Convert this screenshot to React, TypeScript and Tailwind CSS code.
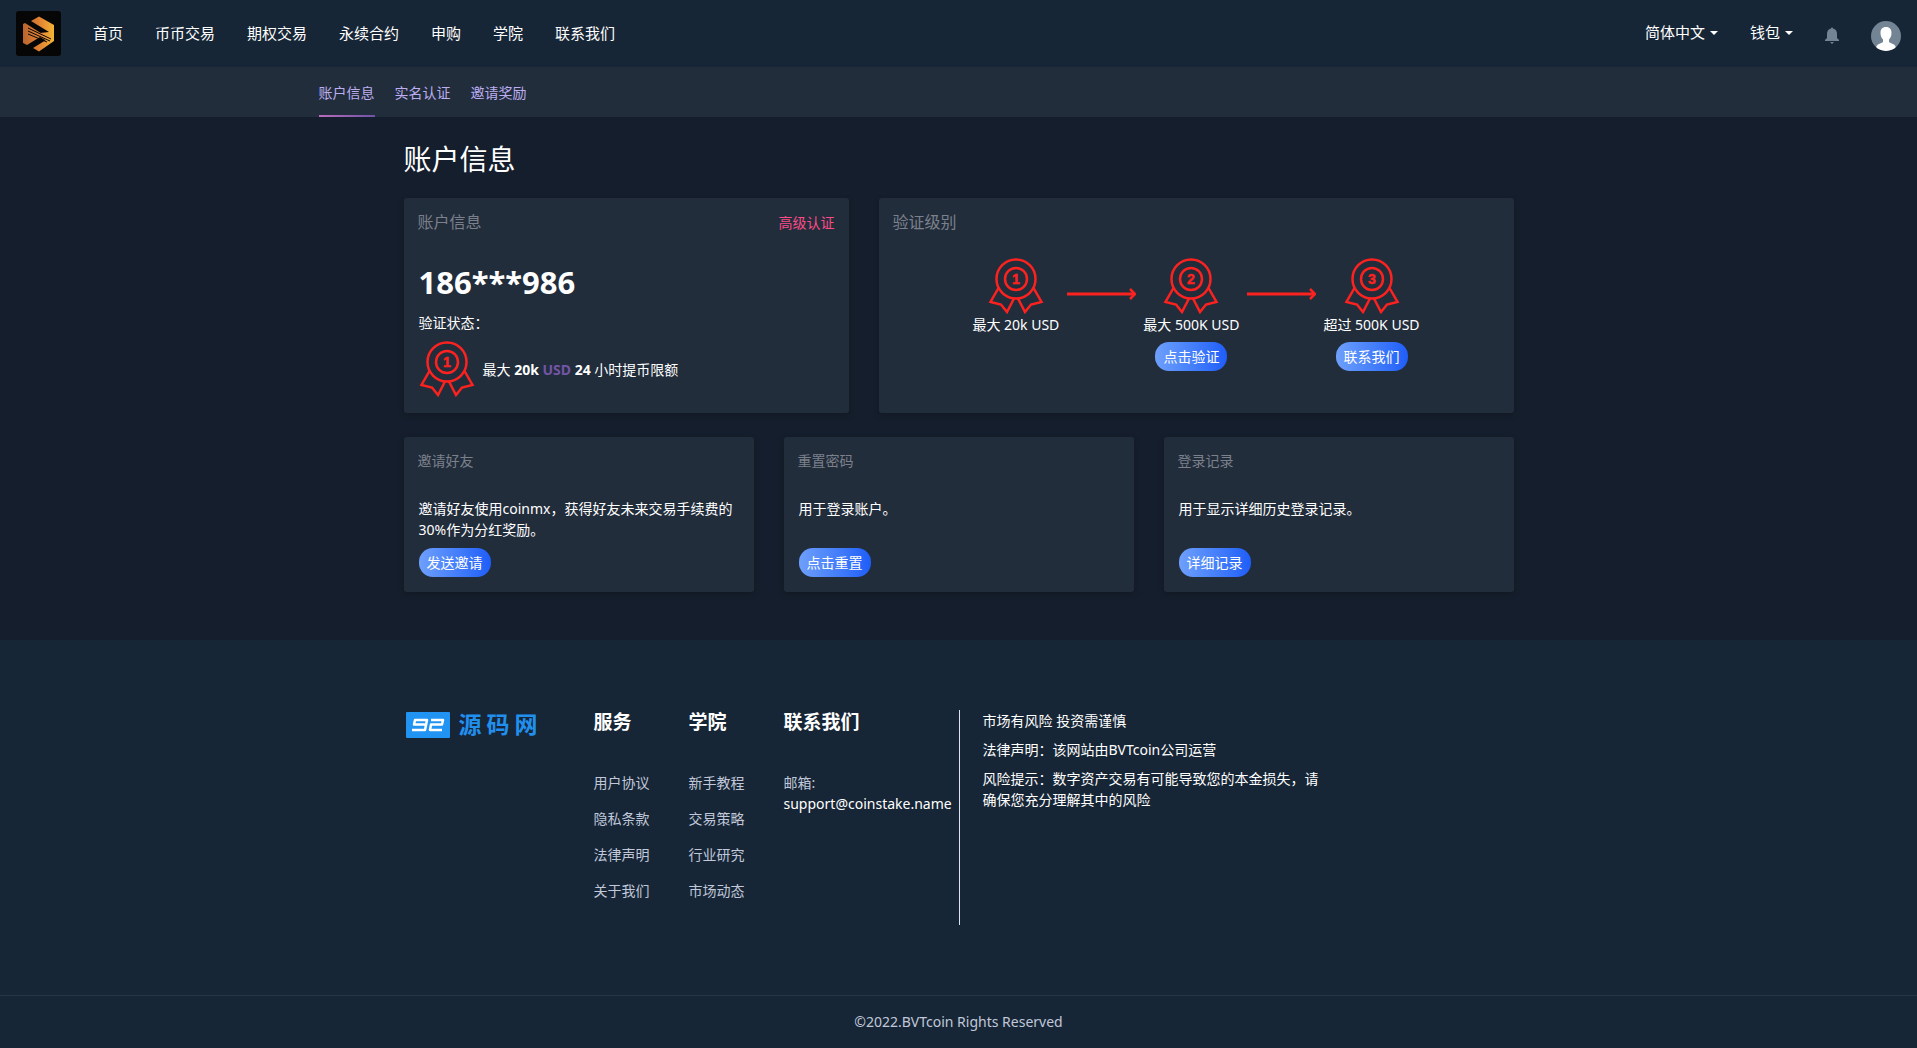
import React from 'react';
import { clsx } from 'clsx';

const navLinks = ['首页', '币币交易', '期权交易', '永续合约', '申购', '学院', '联系我们'];

const tabs = ['账户信息', '实名认证', '邀请奖励'];

const levels = [
  { level: 1, label: '最大 20k USD', action: null },
  { level: 2, label: '最大 500K USD', action: '点击验证' },
  { level: 3, label: '超过 500K USD', action: '联系我们' }
];

const actionCards = [
  {
    title: '邀请好友',
    text: '邀请好友使用coinmx，获得好友未来交易手续费的30%作为分红奖励。',
    action: '发送邀请'
  },
  { title: '重置密码', text: '用于登录账户。', action: '点击重置' },
  { title: '登录记录', text: '用于显示详细历史登录记录。', action: '详细记录' }
];

const footerColumns = [
  { title: '服务', links: ['用户协议', '隐私条款', '法律声明', '关于我们'] },
  { title: '学院', links: ['新手教程', '交易策略', '行业研究', '市场动态'] }
];

const BrandLogo: React.FC = () => (
  <svg viewBox="0 0 45 45" className="w-[45px] h-[45px] shrink-0" aria-hidden="true">
    <defs>
      <linearGradient id="brand" gradientUnits="userSpaceOnUse" x1="7" x2="38" y1="0" y2="0">
        <stop offset="0" stopColor="#b9652f" />
        <stop offset="0.5" stopColor="#e07f33" />
        <stop offset="1" stopColor="#f3b534" />
      </linearGradient>
    </defs>
    <rect width="45" height="45" rx="3" fill="#060606" />
    <g fill="url(#brand)">
      <path d="M15 10 L23 5.500 L38 14 V30 L23 40.500 L17 37 L30 29 L24 22 L33 21 Z" />
      <path d="M7 13 L9 12 L34 28 L31 30 L24 26 L11 34 L7 32 Z" />
    </g>
    <g stroke="#060606" strokeWidth="1">
      <path d="M12 17 L35 28" />
      <path d="M12 20 L34 30" />
      <path d="M12 23 L31 31" />
    </g>
  </svg>
);

const Medal: React.FC<{ level: number }> = ({ level }) => (
  <svg viewBox="0 0 56 56" className="size-14 shrink-0" fill="none" stroke="#fc221f" strokeWidth="2.5">
    <circle cx="28" cy="21" r="19.500" />
    <circle cx="28" cy="21" r="11" />
    <path d="M10.500 30 L2.500 44 L13 46.500 L19 54 L26 40.500" />
    <path d="M45.500 30 L53.500 44 L43 46.500 L37 54 L30 40.500" />
    <text
      x="28"
      y="26"
      textAnchor="middle"
      fill="#fc221f"
      strokeWidth="0.5"
      className="font-['Liberation_Sans',sans-serif] text-[14px] font-bold"
    >
      {level}
    </text>
  </svg>
);

const Arrow: React.FC = () => (
  <svg viewBox="0 0 70 12" className="w-[70px] h-3 mx-[7px] mt-[30px] shrink-0" fill="none" stroke="#fc221f">
    <path d="M1 6 H68" strokeWidth="3" />
    <path d="M64 1 L69 6 L64 11" strokeWidth="2.5" />
  </svg>
);

const Caret: React.FC = () => (
  <svg viewBox="0 0 8 4" className="w-2 h-1" aria-hidden="true">
    <path d="M0 0 H8 L4 4 Z" fill="#fff" />
  </svg>
);

const PillButton: React.FC<{ children: React.ReactNode }> = ({ children }) => (
  <button className="block h-[29px] px-2 rounded-[14px] bg-linear-to-r from-[#6e9ffb] to-[#1f5df8] text-sm text-white">
    {children}
  </button>
);

const Card: React.FC<{ className?: string; children: React.ReactNode }> = ({ className, children }) => (
  <section className={clsx('rounded-[3px] bg-[#222d3c] shadow-[0_2px_6px_rgba(0,0,0,0.2)]', className)}>
    {children}
  </section>
);

const App: React.FC = () => {
  return (
    <div className="min-h-screen flex flex-col bg-[#151e2c] text-sm leading-[21px] text-white font-['Noto_Sans','Noto_Sans_CJK_SC',sans-serif]">
      {/* Top bar */}
      <header className="h-[67px] px-4 flex items-center justify-between bg-[#172636]">
        <div className="flex items-center gap-8">
          <a href="#" aria-label="BVTcoin">
            <BrandLogo />
          </a>
          <nav className="flex items-center gap-8 text-[15px]">
            {navLinks.map((link) => (
              <a key={link} href="#">
                {link}
              </a>
            ))}
          </nav>
        </div>

        <div className="flex items-center">
          <button className="flex items-center gap-[5px] text-[15px] mr-8 pb-[2px]">
            简体中文
            <Caret />
          </button>
          <button className="flex items-center gap-[5px] text-[15px] mr-8 pb-[2px]">
            钱包
            <Caret />
          </button>
          <button aria-label="通知" className="mr-8 pt-1">
            <svg viewBox="0 0 14 17" className="w-[14px] h-[17px]" fill="#738495">
              <path d="M7 0 L8 1.500 C11 2.300 12 4.500 12 7 V11 L14 13 V14 H0 V13 L2 11 V7 C2 4.500 3 2.300 6 1.500 Z" />
              <path d="M5 15 H9 L7 17 Z" />
            </svg>
          </button>
          <button aria-label="账户" className="pt-1">
            <svg viewBox="0 0 30 30" className="w-[30px] h-[30px]">
              <defs>
                <clipPath id="avatar">
                  <circle cx="15" cy="15" r="15" />
                </clipPath>
              </defs>
              <g clipPath="url(#avatar)">
                <rect width="30" height="30" fill="#738495" />
                <path
                  fill="#fff"
                  d="M15 6 C19 6 20.500 8.500 20.500 12 C20.500 15 19.500 17 18 18.500 V21 C21 23 24.500 23 25 27 V30 H5 V27 C5.500 23 9 23 12 21 V18.500 C10.500 17 9.500 15 9.500 12 C9.500 8.500 11 6 15 6 Z"
                />
              </g>
            </svg>
          </button>
        </div>
      </header>

      {/* Account tabs */}
      <div className="h-[50px] bg-[#222d3c]">
        <nav className="max-w-[1280px] h-full mx-auto flex gap-5 text-[#bcaef0]">
          {tabs.map((tab, index) => (
            <a key={tab} href="#" className="flex flex-col justify-end">
              <span className="mb-3">{tab}</span>
              <span className={clsx('h-[2px]', index === 0 && 'bg-linear-to-r from-[#bb6bbb] to-[#6f53a8]')} />
            </a>
          ))}
        </nav>
      </div>

      <main className="w-full max-w-[1140px] mx-auto px-[15px] pb-12">
        <h1 className="pt-[22px] pb-[18px] text-[28px] leading-[41px]">账户信息</h1>

        <div className="flex gap-[30px]">
          <Card className="flex-[445] h-[215px]">
            <div className="px-[14px] pt-3 flex items-center justify-between">
              <h2 className="text-base text-[#7b808b]">账户信息</h2>
              <a href="#" className="text-[#fb4b87]">
                高级认证
              </a>
            </div>
            <div className="px-[15px]">
              <p className="mt-[26px] text-[31px] leading-[44px] font-bold">186***986</p>
              <p className="mt-2">验证状态：</p>
              <div className="mt-2 flex items-center gap-2">
                <Medal level={1} />
                <p>
                  最大 <b>20k</b> <b className="text-[#7355a6]">USD</b> <b>24</b> 小时提币限额
                </p>
              </div>
            </div>
          </Card>

          <Card className="flex-[635] h-[215px]">
            <div className="px-[14px] pt-3">
              <h2 className="text-base text-[#7b808b]">验证级别</h2>
            </div>
            <div className="mt-6 flex justify-center">
              {levels.map(({ level, label, action }) => (
                <React.Fragment key={level}>
                  {level > 1 && <Arrow />}
                  <div className="flex flex-col items-center">
                    <Medal level={level} />
                    <p>{label}</p>
                    {action && (
                      <div className="mt-[7px]">
                        <PillButton>{action}</PillButton>
                      </div>
                    )}
                  </div>
                </React.Fragment>
              ))}
            </div>
          </Card>
        </div>

        <div className="mt-6 grid grid-cols-3 gap-[30px]">
          {actionCards.map((card) => (
            <Card key={card.title} className="pb-[15px]">
              <h2 className="px-[14px] pt-[13px] text-[#7b808b]">{card.title}</h2>
              <div className="px-[15px] pt-[27px]">
                <p className="min-h-[42px] mb-2">{card.text}</p>
                <PillButton>{card.action}</PillButton>
              </div>
            </Card>
          ))}
        </div>
      </main>

      {/* Footer */}
      <footer className="grow bg-[#172636]">
        <div className="max-w-[1140px] mx-auto px-[15px] pt-[70px] pb-[70px] flex">
          <a href="#" className="w-[190px] pt-[2px] flex items-start" aria-label="92 源码网">
            <svg viewBox="0 0 44 26" className="w-11 h-[26px] ml-[2px] mr-[9px]">
              <rect width="44" height="26" rx="1" fill="#2193f3" />
              <g fill="none" stroke="#fff" strokeWidth="2.5" strokeLinejoin="round">
                <path d="M20 12.500 H8 L9 8 H21 L19 18 H6" />
                <path d="M25 8 H37 L36 12.500 H25 L24 18 H36" />
              </g>
            </svg>
            <span className="flex gap-[5px] text-[23px] leading-[24px] font-bold text-[#218fee]">
              <span>源</span>
              <span>码</span>
              <span>网</span>
            </span>
          </a>

          {footerColumns.map((column) => (
            <div key={column.title} className="w-[95px]">
              <h3 className="text-[19px] leading-6 font-bold">{column.title}</h3>
              <ul className="mt-[38px] flex flex-col gap-[15px] text-[#c0c8da]">
                {column.links.map((link) => (
                  <li key={link}>
                    <a href="#">{link}</a>
                  </li>
                ))}
              </ul>
            </div>
          ))}

          <div className="w-[175px]">
            <h3 className="text-[19px] leading-6 font-bold">联系我们</h3>
            <p className="mt-[38px] text-[#c0c8da]">邮箱:</p>
            <a href="mailto:support@coinstake.name">support@coinstake.name</a>
          </div>

          <div className="h-[215px] pl-[23px] border-l border-[#dce3f0] flex-1">
            <div className="max-w-[345px] flex flex-col gap-2">
              <p>市场有风险 投资需谨慎</p>
              <p>法律声明：该网站由BVTcoin公司运营</p>
              <p>风险提示：数字资产交易有可能导致您的本金损失，请确保您充分理解其中的风险</p>
            </div>
          </div>
        </div>

        <div className="pt-[15px] pb-3 border-t border-[#283649] text-center text-[#c0c8da]">
          ©2022.BVTcoin Rights Reserved
        </div>
      </footer>
    </div>
  );
};

export default App;
